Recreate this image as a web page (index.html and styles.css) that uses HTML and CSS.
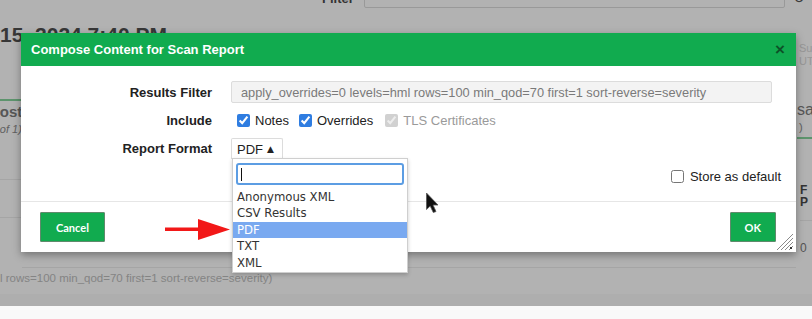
FILE: index.html
```html
<!DOCTYPE html>
<html>
<head>
    <meta charset="utf-8">
    <title>Compose Content for Scan Report</title>
    <link rel="stylesheet" href="styles.css">
</head>
<body>
    <div class="page">
        <div class="toolbar">
            <span class="filter-label">Filter</span>
            <div class="filter-box"></div>
            <span class="tool-icon">&#8635;</span>
        </div>
        <h1 class="report-title">15, 2024 7:40 PM</h1>
        <div class="board">
            <div class="side-left">
                <div class="tab-line"></div>
                <div class="side-name">Host</div>
                <div class="side-note">(1 of 1)</div>
                <div class="side-row first"></div>
                <div class="side-row"></div>
            </div>
            <div class="board-mid">
                <div class="mid-cell">UTC</div>
            </div>
            <div class="side-right">
                <div class="stamp">Su<br>UT</div>
                <div class="side-name">sa</div>
                <div class="side-note">)</div>
                <div class="tab-line"></div>
                <div class="side-head">F<br>P</div>
                <div class="side-num">0</div>
            </div>
        </div>
        <div class="applied">l rows=100 min_qod=70 first=1 sort-reverse=severity)</div>
    </div>

    <div class="backdrop"></div>

    <div class="dialog">
        <div class="dialog-header">
            <span class="dialog-title">Compose Content for Scan Report</span>
            <span class="dialog-close">&times;</span>
        </div>
        <div class="dialog-body">
            <div class="form-grid">
                <div class="form-label">Results Filter</div>
                <div class="filter-field">apply_overrides=0 levels=hml rows=100 min_qod=70 first=1 sort-reverse=severity</div>

                <div class="form-label">Include</div>
                <div class="checks">
                    <label class="check"><input type="checkbox" checked>Notes</label>
                    <label class="check"><input type="checkbox" checked>Overrides</label>
                    <label class="check disabled"><input type="checkbox" checked disabled>TLS Certificates</label>
                </div>

                <div class="form-label">Report Format</div>
                <div class="select-wrap">
                    <div class="select-box">PDF <span class="select-arrow">&#9650;</span></div>
                    <div class="dropdown">
                        <div class="dropdown-search"><span class="caret"></span></div>
                        <div class="option">Anonymous XML</div>
                        <div class="option">CSV Results</div>
                        <div class="option active">PDF</div>
                        <div class="option">TXT</div>
                        <div class="option">XML</div>
                    </div>
                </div>
            </div>
            <div class="store-row">
                <label class="check"><input type="checkbox">Store as default</label>
            </div>
        </div>
        <div class="dialog-footer">
            <button class="btn">Cancel</button>
            <button class="btn">OK</button>
            <svg class="resize" width="18" height="18" viewBox="0 0 18 18">
                <path d="M18 2 L2 18 M18 6 L6 18 M18 10 L10 18 M18 14 L14 18" stroke="#8a8a8a" stroke-width="1"/>
                <rect x="15" y="15" width="2" height="2" fill="#333"/>
            </svg>
        </div>
    </div>

    <svg class="arrow" width="66" height="24" viewBox="0 0 66 24">
        <rect x="0" y="9.5" width="36" height="3.5" fill="#f21818"/>
        <polygon points="33,1 65,11.5 33,22" fill="#f21818"/>
    </svg>

    <svg class="cursor" width="15" height="23" viewBox="0 0 15 23">
        <path d="M1.5 1 L1.5 17.5 L5.2 14 L8.3 20.5 L11 19.5 L8 13 L13 13 Z" fill="#111" stroke="#555" stroke-width="0.8"/>
    </svg>
</body>
</html>
```

FILE: styles.css
```css
body {
  margin: 0;
  width: 812px;
  height: 319px;
  overflow: hidden;
  position: relative;
  font-family: "Liberation Sans", Arial, sans-serif;
  font-size: 13px;
  background-color: #f9f9f9;
}

/* page under the modal */
.page {
  height: 306px;
  background-color: #fff;
  color: #505050;
}

.toolbar {
  display: flex;
  align-items: center;
  height: 20px;
  margin-top: -12px;
  padding-left: 322px;
}

.filter-label {
  font-weight: bold;
  color: #4a4a4a;
}

.filter-box {
  width: 419px;
  height: 18px;
  margin-left: 10px;
  border: 1px solid #dcdcdc;
  border-radius: 2px;
}

.tool-icon {
  margin-left: 8px;
  font-size: 14px;
  color: #555;
}

.report-title {
  margin: 14px 0 -8px 0;
  font-size: 21px;
  line-height: 26px;
  color: #505050;
}

.board {
  display: flex;
  height: 230px;
}

.side-left {
  width: 22px;
  flex: none;
  padding-top: 59px;
}

.tab-line {
  height: 2px;
  background-color: #86d49c;
}

.side-name {
  margin-left: -11px;
  font-size: 15px;
  font-weight: bold;
  line-height: 18px;
  margin-top: 2px;
  color: #7c7c7c;
}

.side-note {
  margin-left: -13px;
  font-size: 11px;
  font-style: italic;
  line-height: 16px;
  color: #8a8a8a;
}

.side-row {
  height: 37px;
  border-bottom: 1px solid #ececec;
}

.side-row.first {
  height: 42px;
}

.board-mid {
  flex: 1;
  display: flex;
  flex-direction: column;
  justify-content: flex-end;
}

.mid-cell {
  padding-left: 461px;
  height: 26px;
  line-height: 14px;
  border-bottom: 1px solid #ececec;
  letter-spacing: 1px;
  color: #c4c4c4;
  margin-bottom: 2px;
}

.side-right {
  width: 15px;
  flex: none;
  padding-left: 1px;
}

.stamp {
  margin-top: 2px;
  margin-left: 2px;
  font-size: 11px;
  line-height: 13px;
  color: #d8d8d8;
}

.side-right .side-name {
  margin-left: 0;
  margin-top: 33px;
  font-weight: normal;
  font-size: 16px;
}

.side-right .side-note {
  margin-left: 2px;
  font-style: normal;
}

.side-right .tab-line {
  margin-top: 2px;
}

.side-head {
  margin-top: 45px;
  margin-left: 3px;
  font-size: 12px;
  font-weight: bold;
  line-height: 12px;
  color: #4a4a4a;
  padding-bottom: 12px;
  border-bottom: 1px solid #ececec;
}

.side-num {
  margin: 20px 0 0 3px;
  font-size: 12px;
  color: #7a7a7a;
}

.applied {
  margin-left: 0;
  margin-top: 2px;
  font-size: 11.5px;
  color: #bdbdbd;
  white-space: nowrap;
}

.backdrop {
  position: absolute;
  left: 0;
  top: 0;
  width: 812px;
  height: 306px;
  background-color: rgba(0, 0, 0, 0.3);
}

/* modal */
.dialog {
  position: absolute;
  left: 21px;
  top: 33px;
  width: 775px;
  height: 219px;
  background-color: #fff;
  box-shadow: 0 3px 8px rgba(0, 0, 0, 0.35);
  color: #222;
}

.dialog-header {
  display: flex;
  align-items: center;
  justify-content: space-between;
  height: 33px;
  padding: 0 11px 0 10px;
  background-color: #11ab4f;
}

.dialog-title {
  font-weight: bold;
  color: #fff;
}

.dialog-close {
  font-size: 17px;
  font-weight: bold;
  color: #0d5228;
}

.dialog-body {
  height: 120px;
  padding-top: 15px;
  border-bottom: 1px solid #e6e6e6;
}

.form-grid {
  display: grid;
  grid-template-columns: 191px 1fr;
  grid-template-rows: 22px 22px 22px;
  column-gap: 19px;
  row-gap: 6px;
  padding-right: 24px;
}

.form-label {
  display: flex;
  align-items: center;
  justify-content: flex-end;
  font-weight: bold;
}

.filter-field {
  display: flex;
  align-items: center;
  padding-left: 9px;
  background-color: #f3f3f3;
  border: 1px solid #dcdcdc;
  border-radius: 2px;
  color: #7a7a7a;
  font-size: 12.8px;
  white-space: nowrap;
}

.checks {
  display: flex;
  align-items: center;
  gap: 6px;
  padding-left: 2px;
  margin-top: 1px;
}

.check {
  display: inline-flex;
  align-items: center;
  gap: 2px;
}

.check input {
  accent-color: #2f7de1;
}

.check.disabled {
  color: #9a9a9a;
  margin-left: 2px;
}

.select-wrap {
  position: relative;
  align-self: start;
  margin-top: 1px;
}

.select-box {
  display: inline-flex;
  align-items: center;
  gap: 4px;
  height: 20px;
  padding: 0 8px 0 5px;
  border: 1px solid #dcdcdc;
  border-bottom: none;
  border-radius: 2px 2px 0 0;
}

.select-arrow {
  font-size: 9px;
  font-family: "DejaVu Sans", sans-serif;
}

.dropdown {
  position: absolute;
  left: 1px;
  top: 20px;
  width: 174px;
  padding: 4px 0 1px 0;
  background-color: #fff;
  border: 1px solid #cfcfcf;
  box-shadow: 0 2px 4px rgba(0, 0, 0, 0.2);
  font-family: "DejaVu Sans", sans-serif;
  font-size: 11.7px;
  color: #333;
  z-index: 2;
}

.dropdown-search {
  display: flex;
  align-items: center;
  height: 18px;
  margin: 0 3px 4px 3px;
  padding-left: 3px;
  border: 2px solid #5c9de3;
  border-radius: 3px;
}

.caret {
  width: 1px;
  height: 13px;
  background-color: #111;
}

.option {
  height: 16.4px;
  line-height: 17px;
  padding-left: 4px;
}

.option.active {
  background-color: #79a9f0;
  color: #fff;
}

.store-row {
  display: flex;
  justify-content: flex-end;
  margin-top: 8px;
  padding-right: 15px;
}

.store-row .check {
  gap: 3px;
}

.dialog-footer {
  position: relative;
  display: flex;
  justify-content: space-between;
  align-items: flex-start;
  height: 40px;
  padding: 10px 20px 0 19px;
}

.btn {
  height: 30px;
  padding: 0 15px;
  background-color: #11ab4f;
  border: 1px solid #5f8a6c;
  border-radius: 1px;
  color: #fff;
  font-family: Lato, "Open Sans", sans-serif;
  font-size: 11px;
  font-weight: bold;
}

.btn:last-of-type {
  padding: 0 14px;
}

.resize {
  position: absolute;
  right: 3px;
  bottom: 2px;
}

.arrow {
  position: absolute;
  left: 165px;
  top: 218px;
}

.cursor {
  position: absolute;
  left: 425px;
  top: 192px;
}
```
